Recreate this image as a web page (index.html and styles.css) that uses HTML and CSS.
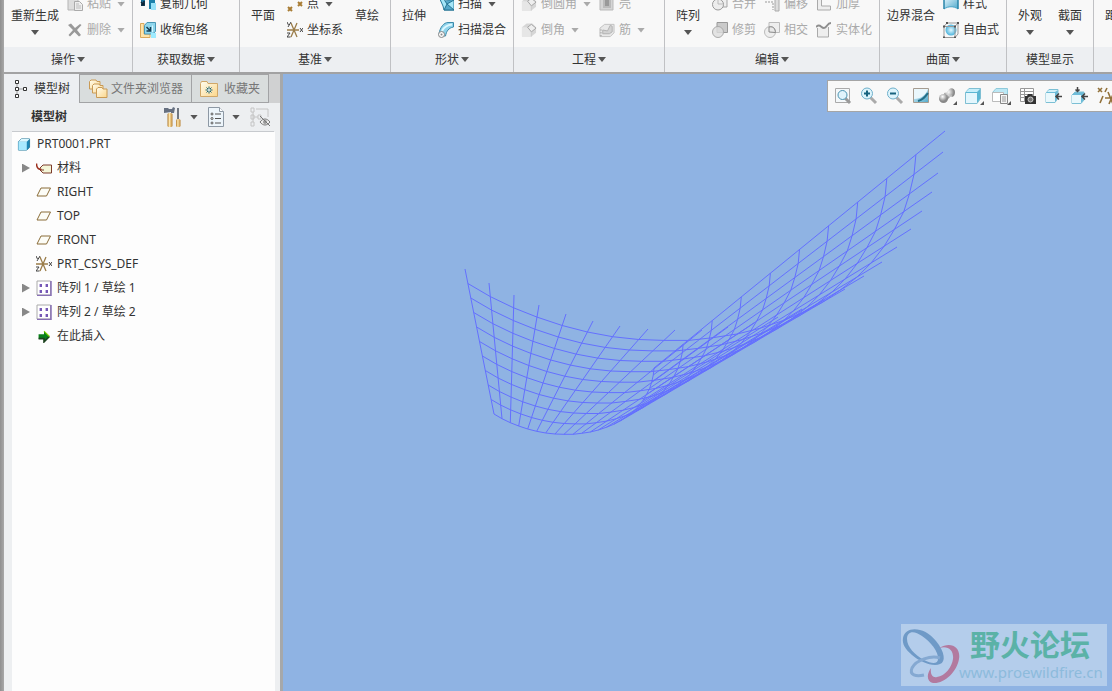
FILE: index.html
```html
<!DOCTYPE html>
<html lang="zh-CN">
<head>
<meta charset="utf-8">
<title>PRT0001.PRT</title>
<link rel="stylesheet" href="styles.css">
</head>
<body>
<svg class="defs" aria-hidden="true">
  <defs>
    <linearGradient id="folder" x1="0" y1="0" x2="1" y2="1"><stop offset="0" stop-color="#fffdf0"/><stop offset="1" stop-color="#fbd68a"/></linearGradient>
    <linearGradient id="sky" x1="0" y1="0" x2="1" y2="1"><stop offset="0" stop-color="#e8f8ff"/><stop offset="1" stop-color="#4fa9cb"/></linearGradient>
    <radialGradient id="ball"><stop offset="0" stop-color="#e2f8ff"/><stop offset="1" stop-color="#4bb3dc"/></radialGradient>
    <radialGradient id="steel" cx=".4" cy=".3"><stop offset="0" stop-color="#fff"/><stop offset="1" stop-color="#888"/></radialGradient>
    <linearGradient id="wood"><stop offset="0" stop-color="#b07a2c"/><stop offset=".4" stop-color="#ffe6ab"/><stop offset="1" stop-color="#b98232"/></linearGradient>
    <symbol id="i-paste" viewBox="0 0 16 16"><path d="M1 1h10v13H1z" fill="#ddd" stroke="#b5b5b5"/><path d="M7.500 5.500h5l3 3v6h-8z" fill="#eee" stroke="#aaa"/><path d="M9 8h3M9 10h5M9 12h5" stroke="#bbb"/></symbol>
    <symbol id="i-delete" viewBox="0 0 16 16"><path d="M1 3 4 1.500 8 6l5-4 1.500 1L10 8l4 5-2 1.500L7.500 10 3 14.500 1.500 13 6 8z" fill="#999"/></symbol>
    <symbol id="i-copygeom" viewBox="0 0 16 16"><path d="M1 2h4v8H1z" fill="#176e98"/><path d="m1 6 3 3M4 5v4H1" stroke="#123" stroke-width="1.500" fill="none"/><path d="M9 2h6v5h-3v6H9z" fill="#1c81aa"/><path d="M11 7h5v7h-5z" fill="#98e2f8"/></symbol>
    <symbol id="i-shrink" viewBox="0 0 16 16"><path d="M.500 1.500H4V12h6v3.500H.500z" fill="#ffe3a8" stroke="#d9a85c"/><path d="M4.500 3.500 7 .500h8.500v9l-3 2.500h-8z" fill="#8fd6ec" stroke="#4a97b5"/><path d="m6.500 5 4 4m0-4v4h-4" stroke="#143b50" stroke-width="1.500" fill="none"/><path d="M12.500 3.500V10" stroke="#d8f7ff"/><path d="M11 11h5v5h-5z" fill="#9eebff"/></symbol>
    <symbol id="i-points" viewBox="0 0 16 16"><path d="m1 11 4 4m0-4-4 4M11 6l4 4m0-4-4 4" stroke="#a87c34" stroke-width="2"/></symbol>
    <symbol id="i-csys" viewBox="0 0 16 16"><path d="M0 8h12M4 1l6 14M10 1 4 15" stroke="#9a7c48" stroke-width="1.300"/><path d="m0 0 1.500 3M4 0 1 5M0 11h3l-3 4h3.500M13 6l3 4m0-4-3 4" stroke="#444" fill="none"/></symbol>
    <symbol id="i-sweep" viewBox="0 0 16 16"><path d="M1 1h4l2 4 9-1v10H6L5 10z" fill="#a4e5f7" stroke="#2b7c9c"/><path d="M6 14 9 8l7 6zM7 5l2 3 7-4" fill="#55a8ca" stroke="#247392"/></symbol>
    <symbol id="i-blend" viewBox="0 0 16 16"><path d="M1 12C2 5 6 .500 10 .500h5.500V5c-5 1-7 4-8 9H2z" fill="#8fd3eb" stroke="#3c8bab"/><path d="M4 9c2-4 5-6 10-6.500" fill="none" stroke="#dcf7ff" stroke-width="2"/><circle cx="3.500" cy="12.500" r="3" fill="#f8f8f8" stroke="#888"/><circle cx="3.500" cy="12.500" r="1" fill="#888"/></symbol>
    <symbol id="i-round" viewBox="0 0 17 16"><path d="M1 5 6 1h6l4 4v6l-5 4H1z" fill="#d6d6d6"/><path d="M1 5h6l4 4v6H1z" fill="#e6e6e6"/><path d="m7 5 4-3 5 4-5 4z" fill="#eee" stroke="#a2a2a2"/><path d="M11 10v5" stroke="#ccc"/></symbol>
    <symbol id="i-shell" viewBox="0 0 16 16"><path d="M1 1h13v13H1z" fill="#d5d5d5" stroke="#b9b9b9"/><path d="M5 3h6v8H5z" fill="#999" stroke="#bbb" stroke-width="2"/></symbol>
    <symbol id="i-rib" viewBox="0 0 17 16"><path d="M1 6 6 2h10v9l-4 4H1z" fill="#e8e8e8" stroke="#c0c0c0"/><path d="M4 12V8l5 1 3-6 2 1v6l-3 2z" fill="#d2d2d2" stroke="#b0b0b0"/><path d="M1 8h2m-2 3h2m-2 3h2" stroke="#aaa"/></symbol>
    <symbol id="i-merge" viewBox="0 0 16 16"><path d="M6 1h9v10H9" fill="#eee" stroke="#a5a5a5"/><circle cx="6" cy="8.500" r="5.500" fill="#ededed" stroke="#999"/><path d="M6 3v5h5" fill="none" stroke="#bbb"/></symbol>
    <symbol id="i-trim" viewBox="0 0 16 16"><path d="M5 .500h10.500v10H5z" fill="#cacaca" stroke="#999"/><circle cx="6" cy="10" r="5.500" fill="#ddd" fill-opacity=".8" stroke="#aaa"/></symbol>
    <symbol id="i-cross" viewBox="0 0 16 16"><path d="M5 .500h10.500v10H5z" fill="#eee" stroke="#bbb"/><circle cx="6" cy="10" r="5.500" fill="#eee" stroke="#bbb"/><path d="M5 10V5c5-1 6 2 6.500 5.500z" fill="#e8e8e8" stroke="#888"/></symbol>
    <symbol id="i-offset" viewBox="0 0 16 16"><path d="M1 6h8v8M1 3h12" fill="none" stroke="#999" stroke-dasharray="2 1"/><path d="M11 2h4v13h-4z" fill="#ddd" stroke="#aaa"/></symbol>
    <symbol id="i-thick" viewBox="0 0 16 16"><path d="M1.500 1v13h13v-4h-9V1z" fill="#eee" stroke="#aaa"/></symbol>
    <symbol id="i-solid" viewBox="0 0 16 16"><path d="M1.500 6v9h11V5" fill="#eee" stroke="#aaa"/><path d="M0 5c4-4 5 1 8 1s3-5 7-5" fill="none" stroke="#8e8e8e" stroke-width="2"/></symbol>
    <symbol id="i-style" viewBox="0 0 16 16"><path d="M1 1h14v12c-4-3-10-3-14 0z" fill="url(#sky)" stroke="#4aa5c8"/><path d="M1 13V2M15 13V2" stroke="#167599"/></symbol>
    <symbol id="i-free" viewBox="0 0 16 16"><circle cx="8" cy="8" r="5.500" fill="url(#ball)"/><path d="M1 4.500h11v11H1zM4 1h11v11M1 4.500 4 1m8 3.500L15 1m-3 14.500 3-3.500" fill="none" stroke="#999"/><path d="M0 3.500h2v2H0zm11 0h2v2h-2zM0 14.500h2V16H0zm11 0h2V16h-2zM3 0h2v2H3zm11 0h2v2h-2z" fill="#555"/></symbol>
    <symbol id="i-tree" viewBox="0 0 14 20"><path d="M3 5v10M3 10h6" stroke="#999" fill="none"/><path d="M1.500 1.500h3v3h-3zm0 7h3v3h-3zm0 7h3v3h-3zm8-7h3v3h-3z" fill="#fff" stroke="#333"/></symbol>
    <symbol id="i-folders" viewBox="0 0 20 20"><g fill="url(#folder)" stroke="#c99a55"><path d="M1.500 10V2.500L3 1h5l1 1.500h3V10z"/><path d="M4.500 14V6.500L6 5h5l1 1.500h3V14z"/><path d="M8.500 18.500V10L10 8.500h4l1 1.500h4v8.500z"/></g></symbol>
    <symbol id="i-fav" viewBox="0 0 18 16"><path d="M.500 15.500V2.500l1-2H7l1 2h9.500v13z" fill="url(#folder)" stroke="#d0a768"/><path d="M9 5.500v7M5.500 9h7M6.500 6.500l5 5m0-5-5 5" stroke="#17647c"/><circle cx="9" cy="9" r="1" fill="#fff"/></symbol>
    <symbol id="i-tools" viewBox="0 0 18 20"><path d="M0 1h4l1 1h3l1-2 2 1-1 5H7V5L0 6z" fill="#667080"/><rect x="3.500" y="6" width="5" height="14" rx="1.500" fill="url(#wood)"/><path d="M14 1v12" stroke="#707780" stroke-width="2"/><rect x="12" y="12" width="4.500" height="8" rx="1.500" fill="url(#wood)"/></symbol>
    <symbol id="i-list" viewBox="0 0 16 20"><path d="M.500.500h11l4 4v15H.500z" fill="#edf5fb" stroke="#8d98a4"/><path d="M11.500.500v4h4" fill="#fff" stroke="#8d98a4"/><path d="M7 7h6M7 11.500h6M7 16h6" stroke="#555"/><g fill="#fff" stroke="#555"><circle cx="4" cy="7" r="1"/><circle cx="4" cy="11.500" r="1"/><circle cx="4" cy="16" r="1"/></g></symbol>
    <symbol id="i-hide" viewBox="0 0 20 20"><path d="M1 1h3v4H1zm0 7h3v4H1zm0 7h3v4H1zM8 8h3v4H8zM3 5v10M4 10h4M6 2h12v8" fill="none" stroke="#c4c4c4"/><path d="M10 15c3-4 7-4 10 0-3 4-7 4-10 0z" fill="#eee" stroke="#777"/><circle cx="15" cy="15" r="2" fill="#999"/><path d="m10 9 10 10" stroke="#777"/></symbol>
    <symbol id="i-part" viewBox="0 0 14 14"><path d="M1 4 4 1h9v9l-3 3H1z" fill="#1d87b5" stroke="#287a9c"/><path d="M1 4h9v9H1z" fill="#a9eaff"/><path d="M1 4 4 1h9l-3 3z" fill="#dcf8ff"/></symbol>
    <symbol id="i-material" viewBox="0 0 16 12"><path d="M7 2.500h8.500v8H7l-3-3v-2z" fill="#f4f6d8" stroke="#7c3c2c"/><path d="M5 7.500h3" stroke="#7c3c2c"/><path d="M.500 1c0 4 1 6 5 6" fill="none" stroke="#9c301e" stroke-width="1.500"/></symbol>
    <symbol id="i-plane" viewBox="0 0 16 13"><path d="M5 2h9.500l-4 8H1z" fill="#fcfcf6" stroke="#8a6c38"/></symbol>
    <symbol id="i-pattern" viewBox="0 0 16 16"><path d="M1 1h13.500v14H1z" fill="#fff" stroke="#aaa"/><path d="M15 1v14.500H1" fill="none" stroke="#8870b5" stroke-width="1.500"/><path d="M3 4h3v3H3zm6 0h3v3H9zM3 10h3v3H3zm6 0h3v3H9z" fill="#7558b5"/><path d="M3 4h1v3H3zm6 0h1v3H9zm-6 6h1v3H3zm6 0h1v3H9z" fill="#c7b8e4"/></symbol>
    <symbol id="i-insert" viewBox="0 0 12 12"><path d="M1 4h5V1l5 5-5 5V8H1z" fill="#087f19"/><path d="M1 8h5v3l5-5" fill="none" stroke="#1c421e" stroke-width="1.500"/><path d="M6 1l5 5" stroke="#80d500"/></symbol>
    <symbol id="i-fit" viewBox="0 0 18 18"><path d="M1.500 1.500h14v14h-14z" fill="#f4f8fa" stroke="#aaa"/><path d="m11 11 5 5" stroke="#999" stroke-width="3"/><circle cx="8.500" cy="8" r="4.500" fill="#e1f4fc" stroke="#4a93b1"/></symbol>
    <symbol id="i-in" viewBox="0 0 18 18"><path d="m10 10 6 6" stroke="#aaa" stroke-width="3"/><circle cx="7" cy="6.500" r="5.500" fill="#ddf4fc" stroke="#6fb0cb"/><path d="M4 6.500h6M7 3.500v6" stroke="#17637f" stroke-width="2"/></symbol>
    <symbol id="i-out" viewBox="0 0 18 18"><path d="m10 10 6 6" stroke="#aaa" stroke-width="3"/><circle cx="7" cy="6.500" r="5.500" fill="#ddf4fc" stroke="#6fb0cb"/><path d="M4 6.500h6" stroke="#17637f" stroke-width="2"/></symbol>
    <symbol id="i-repaint" viewBox="0 0 18 18"><path d="M1.500 1.500h15v14h-15z" fill="url(#sky)" stroke="#a69c91"/><path d="M2 2h14C14 8 9 12 2 12z" fill="#eaf7fc"/><path d="M6 14c5-1 7-4 10-8" stroke="#246f88" stroke-width="2" fill="none"/></symbol>
    <symbol id="i-render" viewBox="0 0 19 18"><path d="m6 6 4-1c0-5 7-5 7 0s-3 5-5 5l-4 4z" fill="url(#steel)"/><circle cx="5.500" cy="11.500" r="4.500" fill="url(#steel)"/><path d="M10 4c-1 4 1 6 4 5" fill="none" stroke="#ddd"/><path d="M19 14v4h-4z" fill="#555"/></symbol>
    <symbol id="i-shade" viewBox="0 0 19 18"><path d="M.500 5.500 4 1.500h11.500v10l-3.500 5H.500z" fill="#5bb6d3" stroke="#7fbfd3"/><path d="M1 6h11v10H1z" fill="#e3f6fd"/><path d="m1 5 3-3h11l-3 3z" fill="#c5eefa"/><path d="M19 14v4h-4z" fill="#555"/></symbol>
    <symbol id="i-saved" viewBox="0 0 19 18"><path d="M.500 5.500 4 1.500h11.500V9l-4 5H.500z" fill="#bce8f5" stroke="#8fcadb"/><path d="M.500 5.500h11v9H.500z" fill="#fff" stroke="#bbb"/><path d="M8.500 7.500h7v9h-7z" fill="#f5f5f5" stroke="#888"/><path d="M10 10h4m-4 2h4m-4 2h4" stroke="#999"/><path d="M19 14v4h-4z" fill="#555"/></symbol>
    <symbol id="i-views" viewBox="0 0 18 18"><path d="M1.500 1.500h13v13h-13zM5.500 2v12M2 4.500h12M2 7.500h12M2 10.500h12" fill="#fff" stroke="#999"/><path d="M6 9h2l1-2h4l1 2h3v8H6z" fill="#333"/><circle cx="11.500" cy="12.500" r="2.500" fill="#777" stroke="#ccc"/></symbol>
    <symbol id="i-anno" viewBox="0 0 18 18"><path d="m1 6 3-3.500h9V11l-3 4.500H1z" fill="#6cbcd9" stroke="#7cc0d5"/><path d="M1 6h9v9H1z" fill="#eaf8fc"/><path d="m2 5 2-2h9l-3 2z" fill="#d2f1fa"/><path d="M11 9.500h6M14 6.500l-3 3 3 3" fill="none" stroke="#444" stroke-width="1.500"/></symbol>
    <symbol id="i-anno2" viewBox="0 0 18 18"><path d="m1 8 3-3h9v8l-3 3.500H1z" fill="#6cbcd9" stroke="#7cc0d5"/><path d="M1 8h9v8H1z" fill="#eaf8fc"/><path d="M11 9.500h6M14 6.500l-3 3 3 3M6.500 0v4.500M4.500 2.500l2 2 2-2" fill="none" stroke="#444" stroke-width="1.500"/></symbol>
    <symbol id="i-datum" viewBox="0 0 18 18"><path d="m1 1 4 4m0-4L1 5m9-4L8 5M6 9l-3 7m5-5h9M11 5l5 12M17 5l-5 12" stroke="#92713a" stroke-width="1.600"/></symbol>
  </defs>
</svg>

<div class="app">
  <div class="edge"></div>
  <div class="main">
    <header class="ribbon">
      <section class="group">
        <div class="body snug">
          <button class="big">重新生成<i class="caret"></i></button>
          <div class="col">
            <button class="cmd" disabled><svg><use href="#i-paste"/></svg>粘贴<i class="caret"></i></button>
            <button class="cmd" disabled><svg><use href="#i-delete"/></svg>删除<i class="caret"></i></button>
          </div>
        </div>
        <button class="foot">操作<i class="caret"></i></button>
      </section>
      <section class="group">
        <div class="body snug">
          <div class="col">
            <button class="cmd"><svg><use href="#i-copygeom"/></svg>复制几何</button>
            <button class="cmd"><svg><use href="#i-shrink"/></svg>收缩包络</button>
          </div>
        </div>
        <button class="foot">获取数据<i class="caret"></i></button>
      </section>
      <section class="group">
        <div class="body">
          <button class="big">平面</button>
          <div class="col">
            <button class="cmd"><svg><use href="#i-points"/></svg>点<i class="caret"></i></button>
            <button class="cmd"><svg><use href="#i-csys"/></svg>坐标系</button>
          </div>
          <button class="big">草绘</button>
        </div>
        <button class="foot">基准<i class="caret"></i></button>
      </section>
      <section class="group">
        <div class="body">
          <button class="big">拉伸</button>
          <div class="col">
            <button class="cmd"><svg><use href="#i-sweep"/></svg>扫描<i class="caret"></i></button>
            <button class="cmd"><svg><use href="#i-blend"/></svg>扫描混合</button>
          </div>
        </div>
        <button class="foot">形状<i class="caret"></i></button>
      </section>
      <section class="group">
        <div class="body snug">
          <div class="col">
            <button class="cmd" disabled><svg><use href="#i-round"/></svg>倒圆角<i class="caret"></i></button>
            <button class="cmd" disabled><svg><use href="#i-round"/></svg>倒角<i class="caret"></i></button>
          </div>
          <div class="col">
            <button class="cmd" disabled><svg><use href="#i-shell"/></svg>壳</button>
            <button class="cmd" disabled><svg><use href="#i-rib"/></svg>筋<i class="caret"></i></button>
          </div>
        </div>
        <button class="foot">工程<i class="caret"></i></button>
      </section>
      <section class="group">
        <div class="body">
          <button class="big">阵列<i class="caret"></i></button>
          <div class="cols">
            <div class="col">
              <button class="cmd" disabled><svg><use href="#i-merge"/></svg>合并</button>
              <button class="cmd" disabled><svg><use href="#i-trim"/></svg>修剪</button>
            </div>
            <div class="col">
              <button class="cmd" disabled><svg><use href="#i-offset"/></svg>偏移</button>
              <button class="cmd" disabled><svg><use href="#i-cross"/></svg>相交</button>
            </div>
            <div class="col">
              <button class="cmd" disabled><svg><use href="#i-thick"/></svg>加厚</button>
              <button class="cmd" disabled><svg><use href="#i-solid"/></svg>实体化</button>
            </div>
          </div>
        </div>
        <button class="foot">编辑<i class="caret"></i></button>
      </section>
      <section class="group">
        <div class="body snug">
          <button class="big">边界混合</button>
          <div class="col">
            <button class="cmd"><svg><use href="#i-style"/></svg>样式</button>
            <button class="cmd"><svg><use href="#i-free"/></svg>自由式</button>
          </div>
        </div>
        <button class="foot">曲面<i class="caret"></i></button>
      </section>
      <section class="group">
        <div class="body wide">
          <button class="big">外观<i class="caret"></i></button>
          <button class="big">截面<i class="caret"></i></button>
        </div>
        <div class="foot">模型显示</div>
      </section>
      <section class="group">
        <div class="body"><button class="big">距</button></div>
        <div class="foot"></div>
      </section>
    </header>

    <div class="work">
      <aside class="side">
        <nav class="tabs">
          <button class="tab active"><svg class="s-tree"><use href="#i-tree"/></svg>模型树</button>
          <button class="tab"><svg class="s-large"><use href="#i-folders"/></svg>文件夹浏览器</button>
          <button class="tab"><svg class="s-fav"><use href="#i-fav"/></svg>收藏夹</button>
        </nav>
        <div class="head">
          <h2>模型树</h2>
          <button class="tool" aria-label="设置"><svg class="s-tools"><use href="#i-tools"/></svg><i class="caret"></i></button>
          <button class="tool" aria-label="显示"><svg class="s-list"><use href="#i-list"/></svg><i class="caret"></i></button>
          <button class="tool" aria-label="隐藏" disabled><svg class="s-large"><use href="#i-hide"/></svg></button>
        </div>
        <ul class="tree">
          <li class="root"><svg><use href="#i-part"/></svg>PRT0001.PRT</li>
          <li class="branch"><svg><use href="#i-material"/></svg>材料</li>
          <li><svg><use href="#i-plane"/></svg>RIGHT</li>
          <li><svg><use href="#i-plane"/></svg>TOP</li>
          <li><svg><use href="#i-plane"/></svg>FRONT</li>
          <li><svg class="full"><use href="#i-csys"/></svg>PRT_CSYS_DEF</li>
          <li class="branch"><svg class="full"><use href="#i-pattern"/></svg>阵列 1 / 草绘 1</li>
          <li class="branch"><svg class="full"><use href="#i-pattern"/></svg>阵列 2 / 草绘 2</li>
          <li><svg><use href="#i-insert"/></svg>在此插入</li>
        </ul>
      </aside>

      <main class="view">
        <svg class="mesh" viewBox="283 74 829 617" preserveAspectRatio="xMinYMin slice" aria-label="曲线网格"><path id="mesh"/></svg>
        <div class="bar">
          <button aria-label="重新调整"><svg><use href="#i-fit"/></svg></button>
          <button aria-label="放大"><svg><use href="#i-in"/></svg></button>
          <button aria-label="缩小"><svg><use href="#i-out"/></svg></button>
          <button aria-label="重画"><svg><use href="#i-repaint"/></svg></button>
          <button class="drop" aria-label="渲染"><svg><use href="#i-render"/></svg></button>
          <button class="drop" aria-label="显示样式"><svg><use href="#i-shade"/></svg></button>
          <button class="drop" aria-label="已保存方向"><svg><use href="#i-saved"/></svg></button>
          <button aria-label="视图管理器"><svg><use href="#i-views"/></svg></button>
          <button aria-label="注释显示"><svg><use href="#i-anno"/></svg></button>
          <button aria-label="旋转中心"><svg><use href="#i-anno2"/></svg></button>
          <button aria-label="基准显示"><svg><use href="#i-datum"/></svg></button>
        </div>
        <div class="mark">
          <svg viewBox="0 0 58 58">
            <path fill-rule="evenodd" fill="#6f9ac7" d="M1 12C3 0 22 0 34 15c9 11 10 21 4 23-7 3-20-2-28-9C3 23 0 18 1 12zm4 1c0 8 8 16 17 21 8 4 14 4 14-1 1-7-8-18-16-23C12 4 5 5 5 13z"/>
            <path fill="none" stroke="#85a9d2" stroke-width="3" d="M38 32c-9-3-24 2-28 10-3 7 4 9 12 7"/>
            <path fill-rule="evenodd" fill="#b27a9f" d="M37 22c12-7 22-1 20 11-2 13-15 25-26 24-6-1-7-8-2-15-1 7 2 10 6 9 8-1 15-10 16-18 1-9-5-14-14-11z"/>
          </svg>
          <div><strong>野火论坛</strong><span>www.proewildfire.cn</span></div>
        </div>
      </main>
    </div>
  </div>
</div>
<script src="mesh.js"></script>
</body>
</html>
```
FILE: styles.css
```css
* { box-sizing: border-box; }
body {
  margin: 0;
  font: 12px/18px "Noto Sans", "Noto Sans CJK SC", sans-serif;
  color: #333;
  background: #f8f8f8;
  overflow: hidden;
}
button {
  border: 0;
  padding: 0;
  background: none;
  font: inherit;
  color: inherit;
  white-space: nowrap;
}
button:disabled { color: #aaa; }
.defs { position: absolute; width: 0; height: 0; }
.app { display: flex; height: 100vh; }
.edge { flex: 0 0 4px; background: linear-gradient(90deg, #8f8f8f, #a8a8a8); }
.main { flex: 1; min-width: 0; display: flex; flex-direction: column; }

.caret {
  width: 8px;
  height: 5px;
  background: #555;
  clip-path: polygon(0 0, 100% 0, 50% 100%);
}
button:disabled .caret { background: #aaa; }

/* ribbon */
.ribbon {
  display: grid;
  grid-template-columns: 129px 107px 151px 123px 151px 215px 127px 87px 1fr;
  border-bottom: 2px solid #a2a2a3;
}
.group { display: flex; flex-direction: column; min-width: 0; overflow: hidden; border-right: 1px solid #c0c1c4; }
.group:last-child { border-right: 0; }
.body { display: flex; gap: 12px; height: 47px; padding-left: 11px; overflow: hidden; }
.body.snug { gap: 8px; padding-left: 7px; }
.body.wide { gap: 16px; }
.cols { display: flex; gap: 8px; }
.big { display: flex; flex-direction: column; align-items: center; gap: 5px; padding-top: 7px; }
.col { display: flex; flex-direction: column; justify-content: flex-end; gap: 2px; padding-bottom: 5px; }
.cmd { display: flex; flex: 0 0 24px; align-items: center; gap: 4px; }
.cmd svg { width: 16px; height: 16px; }
.cmd .caret { margin-left: 2px; }
.foot { display: flex; align-items: center; justify-content: center; gap: 2px; height: 25px; background: #edeff2; }

/* side panel */
.work { flex: 1; min-height: 0; display: flex; }
.side {
  flex: 0 0 279px;
  display: flex;
  flex-direction: column;
  background: #edeff1;
  border-right: 3px solid #a6a8aa;
}
.tabs { display: flex; height: 29px; background: #d0d1d2; }
.tab {
  display: flex;
  align-items: center;
  gap: 3px;
  padding: 0 8px;
  background: #d9dddd;
  color: #777;
  border: solid #a2a3a5;
  border-width: 1px 1px 1px 0;
}
.tab.active { gap: 6px; padding: 0 9px 0 10px; background: #edeff2; color: #333; border-width: 0 1px 0 0; }
.tab svg.s-tree { width: 14px; height: 20px; }
.s-large { width: 20px; height: 20px; }
.s-fav { width: 18px; height: 16px; }
.s-tools { width: 18px; height: 20px; }
.s-list { width: 16px; height: 20px; }
.tab:last-child { gap: 6px; padding: 0 8px; }
.head {
  display: flex;
  align-items: center;
  gap: 10px;
  height: 29px;
  margin: 0 6px 0 8px;
  padding: 0 4px 0 19px;
  border-bottom: 1px solid #c7cace;
}
.head h2 { flex: 1; margin: 0; font-size: 12px; line-height: 18px; }
.tool { display: flex; align-items: center; gap: 8px; }
.tree { flex: 1; margin: 0 5px 0 8px; padding: 0; list-style: none; background: #fdfdfd; }
.tree li { display: flex; align-items: center; gap: 5px; height: 24px; padding-left: 24px; }
.tree li.root { padding-left: 4px; }
.tree svg { width: 16px; height: 13px; }
.tree svg.full { height: 16px; }
.tree li.branch { padding-left: 10px; gap: 5px; }
.branch::before { content: ""; width: 8px; height: 9px; margin-right: 1px; background: #888; clip-path: polygon(0 0, 100% 50%, 0 100%); }

/* graphics area */
.view { flex: 1; min-width: 0; position: relative; overflow: hidden; background: #8fb3e3; }
.mesh { display: block; width: 100%; height: 100%; }
.mesh path { fill: none; stroke: #6470ff; stroke-width: 1; }
.bar {
  position: absolute;
  top: 6px;
  right: 0;
  width: 285px;
  height: 32px;
  display: flex;
  align-items: center;
  gap: 8px;
  padding-left: 6px;
  overflow: hidden;
  background: #f8f8f8;
  border: 1px solid #a5a5a5;
  border-right: 0;
}
.bar button { flex: 0 0 18px; height: 18px; }
.bar .drop { flex-basis: 19px; }
.bar svg { display: block; width: 100%; height: 18px; }
.mark {
  position: absolute;
  right: 5px;
  bottom: 5px;
  width: 206px;
  height: 62px;
  background: #b4cdeb;
}
.mark svg { position: absolute; left: 1px; top: 2px; width: 58px; height: 58px; }
.mark div { display: flex; flex-direction: column; padding-left: 58px; }
.mark strong { padding-left: 11px; font: 700 30px/38px "Noto Sans CJK SC", sans-serif; color: #5bb2a7; }
.mark span { font: 15px/20px "Noto Sans", sans-serif; color: #8dbbdc; }
```
FILE: mesh.js
```js
// Rim points of the surface; the base curve is the rim at one third scale.
const rim = [
  [465, 269], [489, 283], [514, 295], [539, 305], [566, 314], [593, 321],
  [620, 326], [648, 329], [675, 330], [702, 330], [728, 327], [754, 323],
  [778, 317], [802, 309], [824, 300], [845, 289], [864, 276], [882, 262],
  [897, 247], [911, 229], [922, 211], [932, 192], [938, 173], [943, 152],
  [945, 131]
];
const steps = 10;

function pointAt([x, y], k) {
  const scale = 1 - (2 / 3) * (k / steps);
  const originX = 465 + 29 * (k / steps);
  const originY = 269 + 145 * (k / steps);
  return [originX + (x - 465) * scale, originY + (y - 269) * scale].map(v => v.toFixed(1));
}

let d = rim.map(p => `M${pointAt(p, 0)}L${pointAt(p, steps)}`).join("");
for (let k = 1; k <= steps; k++) {
  d += "M" + rim.map(p => pointAt(p, k)).join("L");
}
document.getElementById("mesh").setAttribute("d", d);
```
